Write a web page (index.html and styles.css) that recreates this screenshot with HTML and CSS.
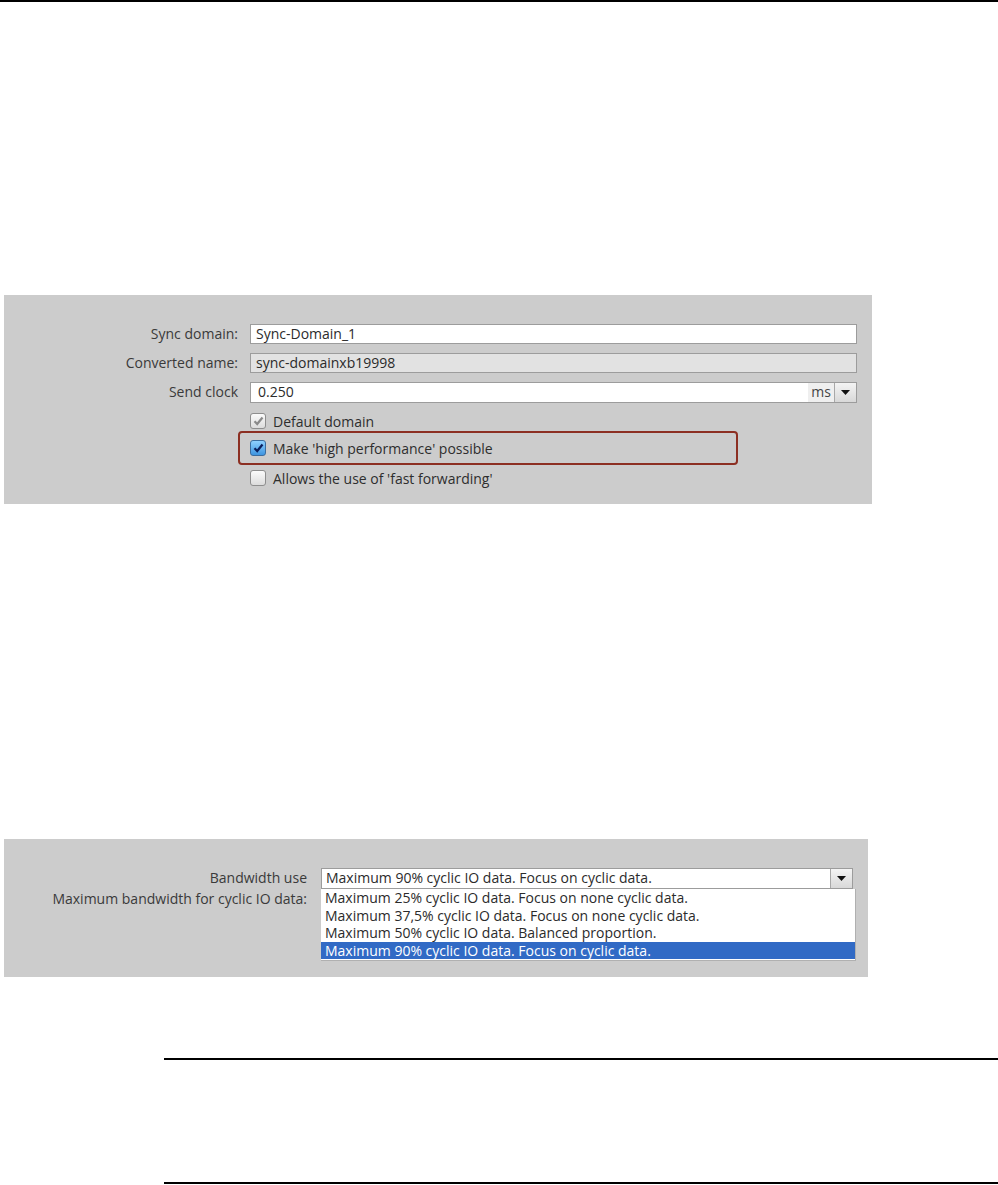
FILE: index.html
```html
<!DOCTYPE html>
<html>
<head>
<meta charset="utf-8">
<link rel="stylesheet" href="styles.css">
</head>
<body>
<div class="topline"></div>

<div class="panel panel-sync">
  <div class="label">Sync domain:</div>
  <div class="field">Sync-Domain_1</div>

  <div class="label">Converted name:</div>
  <div class="field disabled">sync-domainxb19998</div>

  <div class="label">Send clock</div>
  <div class="field combo">
    <span class="value">0.250</span>
    <span class="unit">ms</span>
    <span class="dropbtn"><svg width="9" height="5" viewBox="0 0 9 5"><path d="M0 0H9L4.5 5Z" fill="#111"/></svg></span>
  </div>

  <div class="spacer"></div>
  <div class="checks">
    <div class="check-row first">
      <span class="cb cb-gray"><svg width="11" height="10" viewBox="0 0 11 10"><path d="M1.5 5.2L4.2 8L9.5 1.5" fill="none" stroke="#8a8a8a" stroke-width="2.2"/></svg></span>
      <span>Default domain</span>
    </div>
    <div class="check-row highlight">
      <span class="cb cb-blue"><svg width="11" height="10" viewBox="0 0 11 10"><path d="M1.5 5.2L4.2 8L9.5 1.5" fill="none" stroke="#0b1f5c" stroke-width="2.2"/></svg></span>
      <span>Make 'high performance' possible</span>
    </div>
    <div class="check-row">
      <span class="cb"></span>
      <span>Allows the use of 'fast forwarding'</span>
    </div>
  </div>
</div>

<div class="panel panel-bw">
  <div class="label">Bandwidth use</div>
  <div class="select-wrap">
    <div class="field select">
      <span class="value">Maximum 90% cyclic IO data. Focus on cyclic data.</span>
      <span class="dropbtn"><svg width="9" height="5" viewBox="0 0 9 5"><path d="M0 0H9L4.5 5Z" fill="#111"/></svg></span>
    </div>
    <ul class="droplist">
      <li>Maximum 25% cyclic IO data. Focus on none cyclic data.</li>
      <li>Maximum 37,5% cyclic IO data. Focus on none cyclic data.</li>
      <li>Maximum 50% cyclic IO data. Balanced proportion.</li>
      <li class="selected">Maximum 90% cyclic IO data. Focus on cyclic data.</li>
    </ul>
  </div>
  <div class="label">Maximum bandwidth for cyclic IO data:</div>
  <div></div>
</div>

<div class="note">
  <div class="note-rule"></div>
  <div class="note-body"></div>
  <div class="note-rule"></div>
</div>
</body>
</html>
```

FILE: styles.css
```css
html, body {
  margin: 0;
  padding: 0;
  background: #ffffff;
}

body {
  width: 998px;
  font-family: "Open Sans", "DejaVu Sans", sans-serif;
  font-size: 14px;
  color: #333333;
}

.topline {
  height: 2px;
  background: #000000;
}

.panel {
  background: #cccccc;
  margin-left: 4px;
  display: grid;
  box-sizing: border-box;
}

.panel-sync {
  margin-top: 293px;
  width: 868px;
  height: 209px;
  grid-template-columns: 234px 1fr;
  column-gap: 12px;
  row-gap: 9px;
  padding: 29px 15px 0 0;
  align-content: start;
}

.label {
  text-align: right;
  line-height: 20px;
  color: #3a3a3a;
}

.field {
  height: 20px;
  box-sizing: border-box;
  border: 1px solid #9c9c9c;
  background: #ffffff;
  line-height: 18px;
  padding-left: 5px;
  color: #2b2b2b;
}

.field.disabled {
  background: #e2e2e2;
}

.combo {
  display: flex;
  height: 21px;
  padding-left: 0;
}

.combo .value {
  flex: 1;
  padding-left: 7px;
}

.combo .unit {
  width: 26px;
  background: #efefef;
  text-align: center;
  color: #444;
}

.dropbtn {
  width: 21px;
  display: flex;
  align-items: center;
  justify-content: center;
  border-left: 1px solid #a8a8a8;
  background: linear-gradient(#f4f4f4, #d8d8d8);
}

.spacer {
  grid-column: 1;
}

.checks {
  display: flex;
  flex-direction: column;
  margin-top: 1px;
}

.check-row {
  display: flex;
  align-items: center;
  gap: 7px;
  height: 22px;
  color: #2e2e2e;
}

.check-row.first {
  height: 16px;
}

.check-row.highlight {
  height: 34px;
  margin: 2px 0 2px -12px;
  padding-left: 10px;
  width: 500px;
  box-sizing: border-box;
  border: 2px solid #8c2f22;
  border-radius: 4px;
}

.cb {
  width: 16px;
  height: 16px;
  box-sizing: border-box;
  border: 1px solid #8e8e8e;
  border-radius: 3px;
  background: linear-gradient(#fbfbfb, #dcdcdc);
  display: flex;
  align-items: center;
  justify-content: center;
  flex: none;
}

.cb-blue {
  border-color: #3b6c9e;
  background: linear-gradient(#8fd0ff, #3e95e0);
}

.panel-bw {
  margin-top: 335px;
  width: 864px;
  height: 138px;
  grid-template-columns: 303px 532px;
  column-gap: 14px;
  padding-top: 29px;
  align-content: start;
}

.select-wrap {
  position: relative;
}

.select {
  display: flex;
  height: 21px;
  padding-left: 0;
}

.select .value {
  flex: 1;
  padding-left: 4px;
}

.droplist {
  position: absolute;
  left: 0;
  top: 21px;
  width: 534px;
  margin: 0;
  padding: 0 0 1px 0;
  list-style: none;
  background: #ffffff;
  border-right: 1px solid #b0b0b0;
  border-bottom: 1px solid #b0b0b0;
}

.droplist li {
  height: 17.5px;
  line-height: 17px;
  padding-left: 4px;
  color: #2b2b2b;
}

.droplist li.selected {
  background: #316ac5;
  color: #ffffff;
}

.note {
  margin-top: 81px;
  margin-left: 164px;
}

.note-rule {
  height: 2px;
  background: #000000;
}

.note-body {
  height: 122px;
}
```
